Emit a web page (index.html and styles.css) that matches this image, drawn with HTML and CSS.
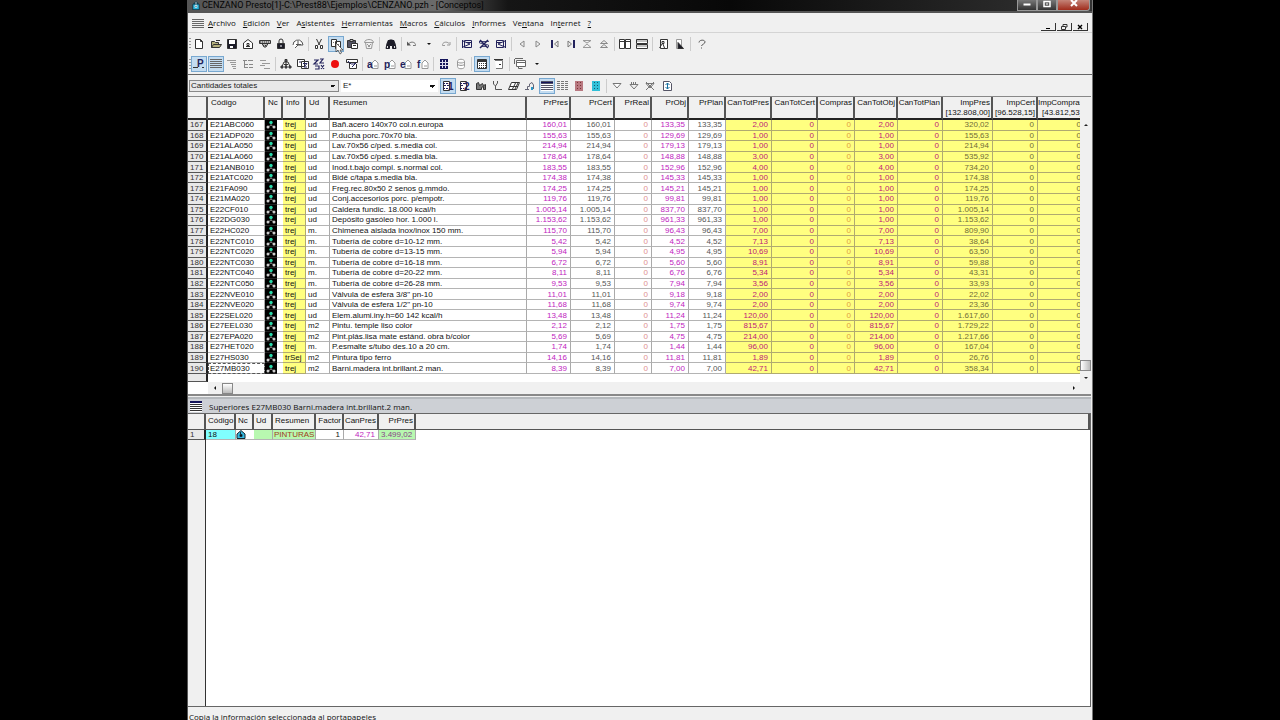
FILE: index.html
```html
<!DOCTYPE html>
<html lang="es">
<head>
<meta charset="utf-8">
<title>CENZANO Presto</title>
<link rel="stylesheet" href="styles.css">
</head>
<body>
<div class="app">
  <header class="titlebar">
    <svg class="title-icon" viewBox="0 0 10 12"><path d="M1 5 5 1 9 5V11H1Z" fill="#123c50"/><path d="M2 5h6v5H2z" fill="#28b4dc"/><path d="M5 2v3M4 6h2v2H4z" stroke="#fff" stroke-width=".8" fill="#123c50"/></svg>
    <h1 class="title-text">CENZANO Presto[1]-C:\Prest88\Ejemplos\CENZANO.pzh - [Conceptos]</h1>
    <div class="win-buttons">
      <button class="win-btn" aria-label="Minimizar"><svg viewBox="0 0 12 10"><path d="M2.500 3.500h7v2h-7z" fill="#fff"/></svg></button>
      <button class="win-btn" aria-label="Restaurar"><svg viewBox="0 0 12 10"><path d="M3 1.500h6v5H3z" fill="none" stroke="#fff" stroke-width="1.500"/><path d="M5 3.500h2v1H5z" fill="#fff"/></svg></button>
      <button class="win-btn close" aria-label="Cerrar"><svg viewBox="0 0 12 10"><path d="M3 0 9 6M9 0 3 6" stroke="#fff" stroke-width="2"/></svg></button>
    </div>
  </header>
  <nav class="menubar">
    <svg class="doc-icon" viewBox="0 0 12 10"><path d="M0 1.500h12M0 3.500h12M0 5.500h12M0 7.500h12M0 9.500h12" stroke="#444" stroke-width=".8"/></svg>
    <button class="menu"><u>A</u>rchivo</button><button class="menu"><u>E</u>dición</button><button class="menu"><u>V</u>er</button><button class="menu">A<u>s</u>istentes</button><button class="menu"><u>H</u>erramientas</button><button class="menu"><u>M</u>acros</button><button class="menu"><u>C</u>álculos</button><button class="menu"><u>I</u>nformes</button><button class="menu">Ve<u>n</u>tana</button><button class="menu">In<u>t</u>ernet</button><button class="menu"><u>?</u></button>
    <div class="mdi-buttons">
      <button class="mdi" aria-label="Minimizar ventana"><svg viewBox="0 0 10 8"><path d="M3 5.500h4" stroke="#000"/></svg></button>
      <button class="mdi" aria-label="Restaurar ventana"><svg viewBox="0 0 10 8"><path d="M4 3V1.500h4V4H7M2.500 3.500h4v3h-4z" fill="none" stroke="#333"/></svg></button>
      <button class="mdi" aria-label="Cerrar ventana"><svg viewBox="0 0 10 8"><path d="m3 2 4 4m0-4L3 6" stroke="#000" stroke-width="1.400"/></svg></button>
    </div>
  </nav>
  <div class="toolbar" id="bar-standard"></div>
  <div class="toolbar" id="bar-view"></div>
  <div class="toolbar filter">
    <select class="combo scheme" aria-label="Esquema"><option>Cantidades totales</option></select>
    <select class="combo mask" aria-label="Máscara"><option>E*</option></select>
    <div class="tools" id="bar-filter"></div>
  </div>
  <main class="workspace">
    <section class="concepts">
      <div class="concepts-view">
        <table class="grid main-grid">
          <colgroup><col class="w20"><col class="w57"><col class="w18"><col class="w23"><col class="w24"><col><col class="w44"><col class="w44"><col class="w37"><col class="w37"><col class="w37"><col class="w46"><col class="w46"><col class="w37"><col class="w43"><col class="w45"><col class="w50"><col class="w45"><col class="w47"></colgroup>
          <thead><tr><th></th><th>Código</th><th>Nc</th><th>Info</th><th>Ud</th><th>Resumen</th><th class="r">PrPres</th><th class="r">PrCert</th><th class="r">PrReal</th><th class="r">PrObj</th><th class="r">PrPlan</th><th class="r">CanTotPres</th><th class="r">CanTotCert</th><th class="r">Compras</th><th class="r">CanTotObj</th><th class="r">CanTotPlan</th><th class="r">ImpPres<br>[132.808,00]</th><th class="r">ImpCert<br>[96.528,15]</th><th class="r">ImpCompras<br>[43.812,53]</th></tr></thead>
          <tbody id="rows"></tbody>
        </table>
        <div class="gutter-end"></div>
      </div>
      <div class="vscroll">
        <svg class="arrow" viewBox="0 0 8 6"><path d="M2 4h4L4 2z" fill="#222"/></svg>
        <span class="v-thumb"></span>
        <svg class="arrow" viewBox="0 0 8 6"><path d="M2 2h4L4 4z" fill="#222"/></svg>
      </div>
      <div class="hscroll">
        <svg class="arrow" viewBox="0 0 8 6"><path d="M5 1v4L3 3z" fill="#111"/></svg>
        <span class="h-thumb"></span>
        <svg class="arrow last" viewBox="0 0 8 6"><path d="M3 1v4l2-2z" fill="#111"/></svg>
      </div>
    </section>
    <section class="parents">
      <h2 class="panel-title"><svg class="panel-icon" viewBox="0 0 12 11"><path d="M0 0h12v2H0z" fill="#14145a"/><path d="M0 2h12v9H0z" fill="#fff"/><path d="M0 3.500h12M0 5.500h12M0 7.500h12M0 9.500h12" stroke="#333"/></svg>Superiores E27MB030 Barni.madera int.brillant.2 man.</h2>
      <div class="parents-view">
        <table class="grid parent-grid">
          <colgroup><col class="w18"><col class="w30"><col class="w18"><col class="w19"><col class="w43"><col class="w28"><col class="w35"><col class="w37"><col></colgroup>
          <thead><tr><th></th><th>Código</th><th>Nc</th><th>Ud</th><th>Resumen</th><th class="r">Factor</th><th class="r">CanPres</th><th class="r">PrPres</th><th></th></tr></thead>
          <tbody><tr><td class="num">1</td><td class="cyan">18</td><td class="mark"><svg viewBox="0 0 10 9"><path d="M1 4 5 .500 9 4v4.500H1z" fill="#35b8e0" stroke="#18252c"/><path d="M4.500 2v2M4 4.500h2v2H4z" stroke="#14303c"/></svg></td><td class="green"></td><td class="green brown">PINTURAS</td><td class="r">1</td><td class="r magenta">42,71</td><td class="r green plum">3.499,02</td><td class="rest"></td></tr></tbody>
        </table>
        <div class="side-gutter"></div>
      </div>
    </section>
  </main>
  <footer class="status">Copia la información seleccionada al portapapeles</footer>
</div>
<script src="app.js"></script>
</body>
</html>
```
FILE: styles.css
```css
* { box-sizing: border-box; }
body { margin: 0; background: #000; overflow: hidden; font: 8px/10px "Liberation Sans", Arial, sans-serif; color: #111; }
button { font: inherit; color: inherit; background: none; border: 0; padding: 0; }
.app { width: 100%; max-width: 906px; height: calc(100vh + 4px); margin: 0 auto; display: flex; flex-direction: column; background: #f0f0f0; overflow: hidden; border-right: 1px solid #777; border-left: 1px solid #555; }
.titlebar { flex: none; height: 13px; display: flex; align-items: flex-start; background: linear-gradient(90deg, #555 0, #6a6a6a 250px, #444 275px, #151515 320px, #080808 60%, #333); border-bottom: 2px solid #555; padding-left: 3px; font: 9px/10px Roboto, sans-serif; }
.title-icon { width: 10px; height: 11px; }
.title-text { margin: 0 0 0 1px; font: inherit; white-space: nowrap; color: #050505; flex: 1; }
.win-buttons { display: flex; height: 11px; margin-right: 2px; }
.win-btn { width: 20px; height: 11px; background: linear-gradient(#777, #333); border: 1px solid #999; border-top: 0; display: flex; justify-content: center; }
.win-btn svg { width: 12px; height: 10px; }
.win-btn.close { width: 33px; background: linear-gradient(#c48478, #a02c1c); border-radius: 0 0 3px 0; }
.menubar { flex: none; height: 20px; display: flex; align-items: center; padding-left: 4px; border-bottom: 1px solid #d4d4d4; font: 8px/12px "Open Sans", sans-serif; }
.doc-icon { width: 12px; height: 10px; }
.menu { padding: 0 3px 0 4px; white-space: nowrap; }
.menu u { text-underline-offset: 1px; }
.mdi-buttons { display: flex; gap: 1px; margin-left: auto; padding: 9px 4px 0 0; }
.mdi { width: 15px; height: 8px; border-bottom: 1px solid #333; border-right: 1px solid #333; display: flex; justify-content: center; }
.mdi svg { width: 10px; height: 8px; }
.toolbar { flex: none; height: 21px; display: flex; align-items: center; padding-left: 3px; }
.toolbar:not(.filter) { gap: 5px; background: repeating-linear-gradient(#999 0 1px, transparent 1px 3px) 1px 5px / 2px 12px no-repeat; }
#bar-view { border-bottom: 1px solid #666; }
.filter { padding-left: 1px; gap: 2px; }
.tools { display: flex; gap: 5px; }
.group { display: flex; justify-content: space-around; position: relative; }
.group + .group::before { content: ""; position: absolute; left: -3px; top: 1px; height: 14px; border-left: 1px solid #ccc; }
.n1 { width: 17px; } .n2 { width: 33px; } .n3 { width: 50px; } .n4 { width: 66px; } .n5 { width: 82px; } .n6 { width: 98px; } .n7 { width: 115px; } .n10 { width: 164px; }
.tool { position: relative; width: 16px; height: 16px; display: flex; align-items: center; justify-content: center; }
.tool.on { background: #c4dcf0; outline: 1px solid #78a8d0; outline-offset: -1px; }
.tool svg { width: 12px; height: 12px; fill: none; stroke: #333; stroke-width: 1; overflow: visible; }
.tool svg .navy { stroke: #22225c; } .tool svg .dark { fill: #1c1c28; } .tool svg .blue { fill: #14145a; stroke: none; } .tool svg .pale { stroke: #999; } .tool svg .white { fill: #fff; }
.tool svg text { font: bold 10px "Liberation Sans", Arial, sans-serif; fill: #22225c; stroke: none; }
.tool svg.cursor { position: absolute; left: 7px; top: 7px; width: 9px; height: 12px; z-index: 2; stroke: #444; stroke-width: .8; fill: #fff; }
.combo { height: 12px; border: 1px solid #888; border-radius: 0; padding: 0 12px 0 1px; font: 8px/10px "Liberation Sans", Arial, sans-serif; color: #222; appearance: none; background: linear-gradient(to top right, transparent 50%, #111 50%) right 5px top 4px / 3px 3px no-repeat, linear-gradient(to top left, transparent 50%, #111 50%) right 2px top 4px / 3px 3px no-repeat, #e8e8e8; }
.scheme { width: 150px; }
.mask { width: 97px; border-color: #fff; background-color: #fff; }
.workspace { flex: 1; min-height: 0; display: flex; flex-direction: column; }
.concepts { flex: none; display: grid; grid-template-columns: 1fr 11px; border-bottom: 2px solid #888; border-top: 1px solid #888; background: #fff; margin-right: 1px; }
.concepts-view { overflow: hidden; position: relative; }
.grid { border-collapse: separate; border-spacing: 0; table-layout: fixed; }
.main-grid { width: calc(100% + 5px); height: 277px; }
.grid th { font-weight: 400; text-align: left; vertical-align: top; background: #f0f0f0; padding: 1px 2px 0 3px; border-right: 2px solid #555; border-bottom: 2px solid #222; white-space: nowrap; line-height: 10px; }
.main-grid th { height: 22px; }
.grid td { padding: 0 3px 0 2px; line-height: 9px; white-space: nowrap; border-right: 1px solid #aaa; border-bottom: 1px solid #b4b4b4; }
.grid .r { text-align: right; }
.grid th.r { padding: 1px 1px 0 0; }
.grid td.num { background: #e8e8e8; border-right: 2px solid #222; border-bottom-color: #555; color: #333; }
.grid td.mark { padding: 0; border-right: 0; text-align: center; }
.grid td.nc { background: linear-gradient(#000, #000) 0 0 / 12px 100% no-repeat; text-align: left; border-bottom-color: #333; border-image: linear-gradient(90deg, #222 12px, #b4b4b4 12px) 1; border-right: 0; }
.mark svg { display: block; width: 12px; height: 9px; }
.parent-grid .mark svg { width: 10px; }
.focus { outline: 1px dashed #555; outline-offset: -1px; }
.magenta { color: #c01cc0; } .gray { color: #555; } .pink { color: #e09090; }
.y { background: #ffff80; } .grid td.y { border-color: #b0aa70; }
.rose { color: #bc2078; } .orange { color: #e0a040; } .olive { color: #706c38; }
.cyan { background: #80ffff; } .green { background: #b8f8b0; } .brown { color: #a04020; } .plum { color: #884488; }
.gutter-end { width: 20px; height: 8px; background: #e8e8e8; border-right: 2px solid #222; border-bottom: 1px solid #555; }
.vscroll { background: #f0f0f0; display: flex; flex-direction: column; align-items: center; padding: 25px 0 1px; }
.arrow { width: 8px; height: 6px; flex: none; }
.v-thumb { width: 11px; height: 11px; border: 1px solid #888; background: linear-gradient(90deg, #fff, #bbb); margin: auto 0 4px; }
.hscroll { grid-column: 1 / -1; height: 12px; margin-left: 20px; padding: 0 13px 0 3px; background: #f0f0f0; display: flex; align-items: center; }
.h-thumb { width: 11px; height: 11px; border: 1px solid #888; background: linear-gradient(#fff, #bbb); margin-left: 3px; }
.last { margin-left: auto; }
.parents { flex: 1; min-height: 0; display: flex; flex-direction: column; margin: 1px 1px 0 0; }
.panel-title { flex: none; height: 16px; margin: 0; padding-left: 2px; display: flex; align-items: center; gap: 7px; background: #cdd0d5; border-top: 2px solid #b4b8bc; font: 8px/11px "Open Sans", sans-serif; }
.panel-icon { width: 12px; height: 11px; }
.parents-view { flex: 1; min-height: 0; background: #fff; display: flex; flex-direction: column; border: 1px solid #666; border-left: 0; }
.parent-grid { width: 100%; flex: none; }
.parent-grid th { height: 16px; padding: 2px 0 0 2px; border-bottom: 1px solid #555; }
.parent-grid td { height: 10px; line-height: 8px; }
.parent-grid td.brown { padding-right: 0; padding-left: 1px; }
.parent-grid th.r { padding-top: 2px; }
.grid td.rest { border: 0; }
.side-gutter { flex: 1; width: 18px; background: #f0f0f0; border-right: 1px solid #333; }
.status { flex: none; height: 17px; padding: 3px 0 0 1px; font: 8px/13px "Open Sans", sans-serif; }
.w18 { width: 18px; } .w19 { width: 19px; } .w20 { width: 20px; } .w23 { width: 23px; } .w24 { width: 24px; } .w28 { width: 28px; } .w30 { width: 30px; } .w35 { width: 35px; } .w37 { width: 37px; } .w43 { width: 43px; } .w44 { width: 44px; } .w45 { width: 45px; } .w46 { width: 46px; } .w47 { width: 47px; } .w50 { width: 50px; } .w57 { width: 57px; }
```
FILE: app.js
```js
const letter = name => '<path class="pale white" d="M5 5 8 2l3 3v5.500H5zM7 8h3"/><text x="0" y="10">' + name + '</text>';
const lines = 'M0 1.500h12M0 3.500h12M0 5.500h12M0 7.500h12M0 9.500h12';
const icons = {
  Nuevo: '<path class="white" d="M2.500 1.500h5l2 2v7h-7zM7.500 1.500v2h2"/>',
  Abrir: '<path d="M1.500 9.500v-6h3l1 1h3v2M1.500 9.500l2-3h8l-2 3zM6 2.500h4" fill="#b4b07c"/>',
  Guardar: '<path class="dark" d="M1.500 1.500h9v9h-9z"/><path fill="#fff" stroke="none" d="M3 2h6v4H3zM4 8h3v2H4z"/>',
  Obra: '<path class="white" d="M1.500 10.500V5L6 1.500 10.500 5v5.500z"/><path d="M5 5.500h2v2H5zM4 8.500h4"/>',
  Imprimir: '<path d="M.500 2.500h11v3H.500zM3 5.500h6L7 9H5z" fill="#bbb"/><path stroke-dasharray="1 1" d="M1 4h10M4 7.500h4"/>',
  Bloquear: '<path class="dark" d="M2.500 5.500h7v5h-7z"/><path d="M4 5V3a2 2 0 0 1 4 0v2"/><path d="M6 7v2" stroke="#fff"/>',
  Consultar: '<path stroke="#555" class="white" d="M1 7a5 5 0 0 1 9-3l1 3H6L3 10M4 6.500h5M6 3v3"/>',
  Cortar: '<path d="m3.500 1 3 6M8.500 1l-3 6"/><path class="white" d="M2.500 7.500h2v3h-2zM7.500 7.500h2v3h-2z"/>',
  Copiar: '<path class="white" d="M1.500 1.500h5v7h-5zM5.500 3.500h5v7h-5z"/><path d="M7 6.500h2M3 4.500h1" stroke="#777"/>',
  Pegar: '<path d="M1.500 2.500h8v7h-8z" fill="#556"/><path d="M4 1.500h3v2H4z" fill="#ccc"/><path class="white" d="M5.500 5.500h6v5h-6z"/><path d="M7 7.500h3"/>',
  Eliminar: '<path class="pale" d="m2.500 4.500 1 6h5l1-6M1.500 4.500c0-4 9-4 9 0zM4 6l3 3m1-3L5 9"/>',
  Buscar: '<path class="dark" stroke="#1c1c28" d="M2 5.500 3.500 2v3h1V2h3v3h1V2L10 5.500l1 5H7.500v-3h-3v3H1z"/><path stroke="#ddd" d="M2.500 8v2M9.500 8v2"/>',
  Deshacer: '<path d="M3 5.500C5 3 10 4 9.500 7.500H7" stroke="#777"/><path stroke="none" fill="#555" d="M1 3.500v4h4z"/>',
  Lista: '<path stroke="none" fill="#111" d="M4 5h4L6 7z"/>',
  Rehacer: '<path class="pale" d="M9 5.500C7 3 2 4 2.500 7.500H5M10 4v3H7"/>',
  "Referencia siguiente": '<path class="navy" d="M1.500 2v8M3.500 2.500h7v7h-7zM1 2.500l8 3.500-8 3.500M6 4.500h4"/>',
  "Quitar referencia": '<path class="navy" stroke-width="1.500" d="m2 2 8 8m0-8-8 8"/><path class="navy" stroke-width=".8" d="M1 3.500h10M1.500 3v2l9 2v2M3 8.500h6"/>',
  "Referencia anterior": '<path class="navy" d="M10.500 2v8M1.500 2.500h7v7h-7zM11 2.500 3 6l8 3.500M2 4.500h4"/>',
  Anterior: '<path d="M8 3v6L4 6z" stroke="#888"/>',
  Siguiente: '<path d="M4 3v6l4-3z" stroke="#888"/>',
  Primero: '<path class="navy" stroke-width="2" d="M3 2v8"/><path d="M9 3v6L5.500 6z" stroke="#777"/>',
  Ultimo: '<path class="navy" stroke-width="2" d="M9 2v8"/><path d="M3 3v6l3.500-3z" stroke="#777"/>',
  Bajar: '<path class="pale" d="M2 2.500h8L6 5zM2 9.500h8L6 6z"/>',
  Subir: '<path d="m2.500 5.500 3.500-3 3.500 3zM2.500 9.500 6 6.500l3.500 3z" stroke="#888"/>',
  "Ventanas verticales": '<path class="white" d="M.500 1.500h5v9h-5zM6.500 1.500h5v9h-5zM.500 3.500h11"/>',
  "Ventanas horizontales": '<path class="white" d="M.500 1.500h11v4H.500zM.500 6.500h11v4H.500z"/><path d="M1 3h10M1 8h10" stroke="#888"/>',
  Persona: '<path class="white" d="M3.500 1.500h7v9h-7z"/><path d="M5 3.500h2v2H5zM5 6l-2.500 4M6 6l1.500 4"/>',
  Grafico: '<path class="white" d="M2.500 1.500h5v9h-5z" stroke="#999"/><path class="dark" d="m4 4.500 5.500 6H4z"/>',
  Ayuda: '<path d="M3 4.500C3 1.500 9 1.500 9 4c0 2-3 2-3.500 4M5.500 9.500v1" stroke="#555"/>',
  Referencia: '<path d="M0 9.500h5M9 9.500h2"/><text x="4" y="9">P</text>',
  Tabla: `<path d="${lines}" stroke="#666"/>`,
  Niveles: '<path d="M1 2.500h9M4 4.500h6M5 6.500h5M6 8.500h4M7 10.500h3" stroke="#999"/>',
  Desglose: '<path d="M1 2.500h4M6 2.500h5M3 6.500h3M7 6.500h4M3 9.500h3M7 9.500h4M2.500 3v7" stroke="#888"/>',
  Arbol: '<path d="M1 2.500h6M3 5.500h8M1 7.500h5M5 10.500h6" stroke="#999"/>',
  Organigrama: '<path d="M2 8.500 4 4h4l2 4.500M6 2v6M4 6.500h4"/><path d="M5 1.500h2v2H5zM1 8h2v2H1zM5 8h2v2H5zM9 8h2v2H9z" fill="#556"/>',
  Calendario: '<path class="white" d="M.500 1.500h7v7h-7zM4.500 3.500h7v7h-7z"/><path class="navy" d="M2 4h2M6 5.500h4L7 9h3"/>',
  Recalcular: '<path class="navy" stroke-width="1.200" d="M1 2h4L1 6h4M7 1h3L7 5h4M2 8h4v3H2M8 7l3 4m0-4-3 4"/>',
  Grabar: '<circle cx="6" cy="6" r="4" fill="#ed1010" stroke="none"/>',
  Ejecutar: '<path class="white" d="M.500 1.500h11v3H.500zM3.500 5v5.500h7V6"/><path class="navy" d="M2 3q3 5 8 2L6 9"/>',
  "Ver a": letter("a"), "Ver p": letter("p"), "Ver e": letter("e"), "Ver f": letter("f"),
  Edificio: '<path class="blue" d="M2 1h8v10H2z"/><path stroke="#dde" d="M4.500 2v8M7.500 2v8M2 4.500h8M2 7.500h8"/>',
  Base: '<path class="pale white" d="M2.500 3.500c0-3 7-3 7 0v5c0 3-7 3-7 0zc0 2 7 2 7 0M2.500 6c0 2 7 2 7 0"/>',
  Calculadora: '<path class="white" d="M1.500 1.500h9v9h-9z"/><path d="M2 2.500h8M2 3.500h8"/><path stroke-dasharray="1 1" d="M3 5.500h7M3 7.500h7M3 9.500h7"/>',
  Agenda: '<path class="white" stroke="#777" d="M2 2.500h7.500v8H3"/><path d="M1 1.500h9M6 6.500h2"/>',
  Ventana: '<path class="white" stroke="#666" d="M2.500 2.500h9v6h-9zM1 .500h8M.500 1v5M2 4.500h9M4.500 9v1.500h4"/>',
  "Esquema uno": '<path class="white" d="M1.500 1.500h6v9h-6z"/><path class="navy" stroke-dasharray="2 1" d="M1 3.500h6M2 5.500h5M1 8.500h6"/><text x="6" y="10">1</text>',
  "Esquema dos": '<path class="white" d="M1.500 1.500h6v9h-6z"/><path class="navy" stroke-dasharray="2 1" d="M1 3.500h5M2 5.500h3M1 8.500h4"/><text x="5" y="10">2</text>',
  Obras: '<path d="M1.500 9.500v-6l2-1 1 3 3-2 1 2 2-1v5h-2v-3l-2 1v2z" fill="#777"/>',
  Medicion: '<path d="M2.500 1v3l2 2 2-3V1M4.500 6v3.500H11" stroke="#555"/>',
  Planos: '<path class="white" d="M3.500 2.500h8l-3 7H.500zM7.500 3l-3 6M2 6.500h8M10 3 7 9"/>',
  Certificar: '<path d="M3.500 9V6.500h2V4L8 2.500 9.500 5v4M1 9.500h4" stroke="#667"/><path stroke="#2998c8" stroke-width="2" d="M8 7v3"/>',
  Listado: `<path class="white" stroke="none" d="M0 1h12v10H0z"/><path class="blue" d="M0 1h12v2H0z"/><path d="${lines}" stroke="#556"/>`,
  Columnas: `<path stroke="#777" stroke-dasharray="3 1" d="${lines}"/>`,
  "Edificio rojo": '<path fill="#b87880" stroke="none" d="M2 1h8v10H2z"/><path stroke="#733" stroke-dasharray="1 2" d="M4.500 2v8M7.500 2v8"/>',
  "Edificio azul": '<path fill="#30c0d8" stroke="none" d="M2 1h8v10H2z"/><path stroke="#145a70" stroke-dasharray="1 2" d="M4.500 2v8M7.500 2v8"/>',
  Filtro: '<path class="white" stroke="#777" d="M2 3.500h8L6 8z"/>',
  "Editar filtro": '<path d="M2 4.500h8L6 9zM3.500 2v3m2-3v3m2-3v3" stroke="#777"/>',
  "Quitar filtro": '<path d="M2 3.500h8L6 8zM2 2l8 8m0-8-8 8" stroke="#777"/>',
  Actualizar: '<path class="white" stroke="#556" d="M2.500 1.500h6l2 2v7h-8z"/><path stroke="#1870a0" d="M6.500 3v6M4.500 5l2-2 2 2M4.500 7l2 2 2-2"/>'
};
const bars = {
  "bar-standard": [["Nuevo","Abrir","Guardar","Obra","Imprimir","Bloquear","Consultar"],["Cortar","*Copiar","Pegar","Eliminar"],["Buscar"],["Deshacer","Lista","Rehacer"],["Referencia siguiente","Quitar referencia","Referencia anterior"],["Anterior","Siguiente","Primero","Ultimo","Bajar","Subir"],["Ventanas verticales","Ventanas horizontales"],["Persona","Grafico"],["Ayuda"]],
  "bar-view": [["*Referencia","*Tabla","Niveles","Desglose","Arbol"],["Organigrama","Calendario","Recalcular","Grabar","Ejecutar"],["Ver a","Ver p","Ver e","Ver f"],["Edificio","Base"],["*Calculadora","Agenda"],["Ventana","Lista"]],
  "bar-filter": [["*Esquema uno","Esquema dos","Obras","Medicion","Planos","Certificar","*Listado","Columnas","Edificio rojo","Edificio azul"],["Filtro","Editar filtro","Quitar filtro","Actualizar"]]
};
const pointer = '<svg class="cursor" viewBox="0 0 9 12"><path d="M1 0v9l2-2 2 4 1.500-1L5 7h3z"/></svg>';
for (const [id, groups] of Object.entries(bars)) {
  document.getElementById(id).innerHTML = groups.map(group => `<div class="group n${group.length}">` + group.map(entry => {
    const name = entry.replace("*", "");
    return `<button class="tool${entry[0] === "*" ? " on" : ""}" aria-label="${name}"><svg viewBox="0 0 12 12">${icons[name]}</svg>${name === "Copiar" ? pointer : ""}</button>`;
  }).join("") + "</div>").join("");
}

// code | unit | summary | price | target price | quantity | amount
const data = `E21ABC060|ud|Bañ.acero 140x70 col.n.europa|160,01|133,35|2,00|320,02
E21ADP020|ud|P.ducha porc.70x70 bla.|155,63|129,69|1,00|155,63
E21ALA050|ud|Lav.70x56 c/ped. s.media col.|214,94|179,13|1,00|214,94
E21ALA060|ud|Lav.70x56 c/ped. s.media bla.|178,64|148,88|3,00|535,92
E21ANB010|ud|Inod.t.bajo compl. s.normal col.|183,55|152,96|4,00|734,20
E21ATC020|ud|Bidé c/tapa s.media bla.|174,38|145,33|1,00|174,38
E21FA090|ud|Freg.rec.80x50 2 senos g.mmdo.|174,25|145,21|1,00|174,25
E21MA020|ud|Conj.accesorios porc. p/empotr.|119,76|99,81|1,00|119,76
E22CF010|ud|Caldera fundic. 18.000 kcal/h|1.005,14|837,70|1,00|1.005,14
E22DG030|ud|Depósito gasóleo hor. 1.000 l.|1.153,62|961,33|1,00|1.153,62
E22HC020|m.|Chimenea aislada inox/inox 150 mm.|115,70|96,43|7,00|809,90
E22NTC010|m.|Tubería de cobre d=10-12 mm.|5,42|4,52|7,13|38,64
E22NTC020|m.|Tubería de cobre d=13-15 mm.|5,94|4,95|10,69|63,50
E22NTC030|m.|Tubería de cobre d=16-18 mm.|6,72|5,60|8,91|59,88
E22NTC040|m.|Tubería de cobre d=20-22 mm.|8,11|6,76|5,34|43,31
E22NTC050|m.|Tubería de cobre d=26-28 mm.|9,53|7,94|3,56|33,93
E22NVE010|ud|Válvula de esfera 3/8" pn-10|11,01|9,18|2,00|22,02
E22NVE020|ud|Válvula de esfera 1/2" pn-10|11,68|9,74|2,00|23,36
E22SEL020|ud|Elem.alumi.iny.h=60 142 kcal/h|13,48|11,24|120,00|1.617,60
E27EEL030|m2|Pintu. temple liso color|2,12|1,75|815,67|1.729,22
E27EPA020|m2|Pint.plás.lisa mate estánd. obra b/color|5,69|4,75|214,00|1.217,66
E27HET020|m.|P.esmalte s/tubo des.10 a 20 cm.|1,74|1,44|96,00|167,04
E27HS030|m2|Pintura tipo ferro|14,16|11,81|1,89|26,76
E27MB030|m2|Barni.madera int.brillant.2 man.|8,39|7,00|42,71|358,34`.split("\n");
const mark = '<svg viewBox="0 0 12 9"><path d="M6 3v3M6 5 3 7m3-2 3 2" stroke="#999" stroke-width=".7"/><circle cx="6" cy="2.500" r="1.700" fill="#28d8a8"/><circle cx="3" cy="7" r="1.500" fill="#ccc"/><circle cx="9" cy="7" r="1.500" fill="#ccc"/></svg>';
document.getElementById("rows").innerHTML = data.map((line, i) => {
  const [code, unit, text, price, target, qty, amount] = line.split("|");
  const cells = [[price, "magenta"], [price, "gray"], ["0", "pink"], [target, "magenta"], [target, "gray"], [qty, "y rose"], ["0", "y rose"], ["0", "y orange"], [qty, "y rose"], ["0", "y rose"], [amount, "y olive"], ["0", "y olive"], ["0", "y olive"]];
  return `<tr><td class="num">${167 + i}</td><td class="${i === 23 ? "focus" : ""}">${code}</td><td class="mark nc">${mark}</td><td class="y">${code === "E27HS030" ? "trSej" : "trej"}</td><td>${unit}</td><td>${text}</td>` + cells.map(([v, c]) => `<td class="r ${c}">${v}</td>`).join("") + "</tr>";
}).join("");
```
